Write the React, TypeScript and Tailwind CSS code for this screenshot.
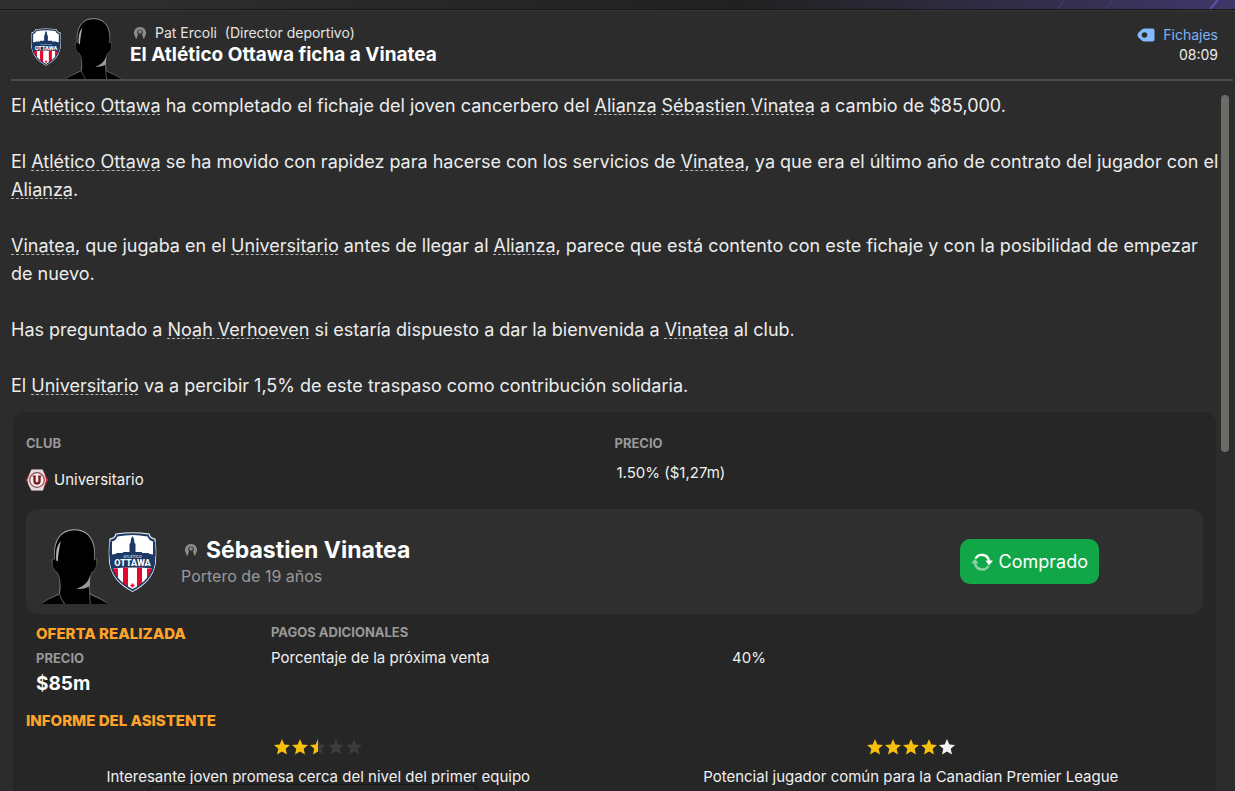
import React from "react";

const sans = "font-['Inter','Liberation_Sans',sans-serif]";

function Crest({ className }: { className?: string }) {
  return (
    <svg viewBox="0 0 48 60" className={className} role="img" aria-label="Atlético Ottawa">
      <defs>
        <clipPath id="crestInner">
          <path d="M9 3.5 Q24 0 39 3.5 Q41 8 45.5 8.5 Q46.5 20 45.5 32 Q43 48 24 57.5 Q5 48 2.5 32 Q1.5 20 2.5 8.5 Q7 8 9 3.5Z" />
        </clipPath>
      </defs>
      <path
        d="M7 1.5 Q24 -1 41 1.5 Q42 6 47 6.5 Q48.5 20 47.2 32 Q44 50 24 60 Q4 50 .8 32 Q-.5 20 1 6.5 Q6 6 7 1.5Z"
        fill="#e9edf2"
      />
      <path
        d="M8 2.5 Q24 0 40 2.5 Q41.5 7 46 7.5 Q47.5 20 46.2 32 Q43 49 24 58.8 Q5 49 1.8 32 Q.5 20 2 7.5 Q6.5 7 8 2.5Z"
        fill="#1d3a66"
      />
      <g clipPath="url(#crestInner)">
        <path d="M9 4.5 Q24 1.5 39 4.5 Q41 9 44.5 9.5 V30 H3.5 V9.5 Q7 9 9 4.5Z" fill="#fff" />
        <path
          d="M0 23 L7 22 8 21 14 21 15 20 H21 V12 L22 11 22.5 7 24 4 25.5 7 26 11 27 12 V20 H33 L34 21 H40 L41 22 48 23 V37 Q24 33.5 0 37Z"
          fill="#1d3a66"
        />
        <path d="M0 37 Q24 34 48 37 V60 H0Z" fill="#fff" />
        <path d="M4 36.500h5.500V60H4zM14.500 35.500h5V60h-5zM28.500 35.500h5V60h-5zM38.500 36.500H44V60h-5.500z" fill="#e4062c" />
        <path d="M24 51.5v4M22 53.5h4" stroke="#e4062c" strokeWidth="1.6" />
      </g>
      <path d="M2 10 Q1 22 2.5 32 Q5 48 24 58 Q43 48 45.5 32 Q47 22 46 10" fill="none" stroke="#1d3a66" strokeWidth="1.6" />
      <g textAnchor="middle" fontFamily="Roboto">
        <text x="24" y="26" fontSize="4" fontWeight="700" fill="#b9c4d3">
          ATLÉTICO
        </text>
        <text x="24" y="34.3" fontSize="9" fontWeight="800" fill="#fff">
          OTTAWA
        </text>
      </g>
    </svg>
  );
}

function Silhouette({ id, viewBox, className }: { id: string; viewBox: string; className?: string }) {
  return (
    <svg viewBox={viewBox} className={className} aria-hidden="true">
      <defs>
        <linearGradient id={id} x1="0" y1="0" x2="0" y2="1">
          <stop offset="0" stopColor="#b8b8b8" />
          <stop offset="0.25" stopColor="#8a8a8a" />
          <stop offset="0.5" stopColor="#3c3c3c" />
          <stop offset="0.8" stopColor="#8a8a8a" />
          <stop offset="1" stopColor="#4a4a4a" />
        </linearGradient>
      </defs>
      <path
        d="M-3 75 C4 69 12 67 17 64 C18 60 18 54 17 48 L15 43 C11.5 42 9.5 36 10 31 C10.5 29 12 29 12.500 30 C10.500 12 18 .8 32 .8 C46 .8 53.500 12 51.500 30 C52.500 29 54 29 54 31 C54.500 36 52.500 42 49 43 L47 49 C46 55 46.500 60 47.500 64 C52 67 60 69 67 75Z"
        fill="#000"
        stroke={`url(#${id})`}
        strokeWidth="1"
      />
      <path d="M14 31 C13.500 22 14.500 16 18.500 12 C17 18 16 24 15.500 32Z" fill="#b4b4b4" />
      <path d="M47.500 46 C45 54 40 57 34 59 C41 59.500 45 58 47 56Z" fill="#9a9a9a" />
      <path d="M17 64 Q19 70 23 75 M47 58 Q46.500 68 48 75" fill="none" stroke="#4d4d4d" strokeWidth="1.200" />
    </svg>
  );
}

function PersonBadge() {
  return (
    <svg viewBox="0 0 12 12" className="size-3 shrink-0" aria-hidden="true">
      <path d="M6 0a6 6 0 0 0-4.800 9.600L1.600 11.500H10.400L10.800 9.600A6 6 0 0 0 6 0Z" fill="#8c8c8c" />
      <path d="M3 12C3 9.300 3.900 8 4.500 7.600L7.500 7.600C8.100 8 9 9.300 9 12Z" fill="#2b2b2b" />
      <circle cx="6" cy="5.200" r="2.800" fill="#2b2b2b" />
      <circle cx="6" cy="4.800" r="1.900" fill="#858585" />
    </svg>
  );
}

function UniversitarioBadge() {
  return (
    <svg viewBox="0 0 22 22" className="size-[22px] shrink-0" aria-hidden="true">
      <path d="M5.500 .5H16.500L22 11 16.500 21.500H5.500L0 11Z" fill="#d22c42" />
      <path d="M5.500 .5H16.500L18.500 5 20 11 17 21.500H5.500L2.500 16 1.500 11 3.500 5Z" fill="#e2dcdc" />
      <circle cx="11" cy="11" r="7.300" fill="#f4eeee" stroke="#8e4a50" strokeWidth="1.200" />
      <path d="M8.500 7V12A2.500 2.500 0 0 0 13.500 12V7" fill="none" stroke="#7f1d25" strokeWidth="2.400" />
      <path d="M6.500 7H10M12 7H15.500" stroke="#7f1d25" strokeWidth="1.200" />
    </svg>
  );
}

function SwapIcon() {
  return (
    <svg viewBox="0 0 22 20" className="h-5 w-[22px] shrink-0" aria-hidden="true">
      <path d="M4.500 6.500A7.300 7.300 0 0 1 18 9" fill="none" stroke="#fff" strokeWidth="2.400" />
      <path d="M14.500 8.500H22L18 13.500Z" fill="#fff" />
      <g opacity="0.5">
        <path d="M4 11A7.300 7.300 0 0 0 17.500 14" fill="none" stroke="#fff" strokeWidth="2.400" />
        <path d="M0 11.500H7.500L4 6.800Z" fill="#fff" />
      </g>
    </svg>
  );
}

const starPath = "M8 0 10.300 5.400 16 5.900 11.700 9.800 13 15.600 8 12.600 3 15.600 4.300 9.800 0 5.900 5.700 5.400Z";

function Stars({ fills, label }: { fills: string[]; label: string }) {
  return (
    <div className="flex h-4 justify-center gap-[2px]" role="img" aria-label={label}>
      {fills.map((fill, i) => (
        <svg key={i} viewBox="0 0 16 16" className="size-4">
          <path d={starPath} fill={fill === "half" ? "#3a3c3c" : fill} />
          {fill === "half" && (
            <path d="M8 0V12.600L3 15.600 4.300 9.800 0 5.900 5.700 5.400Z" fill="#f6c00c" />
          )}
        </svg>
      ))}
    </div>
  );
}

function L({ children }: { children: React.ReactNode }) {
  return (
    <a
      href="#"
      className="underline decoration-[#b5b5b5] decoration-dashed decoration-1 underline-offset-2 [text-decoration-skip-ink:none]"
    >
      {children}
    </a>
  );
}

function Header() {
  return (
    <header className="ml-[11px] mr-[2px] flex h-[70px] shrink-0 border-b-2 border-[#4b4b4b]">
      <Crest className="ml-5 mt-[17px] h-[38px] w-[30px]" />
      <Silhouette id="rimHeader" viewBox="-2 0 68 74" className="ml-1 mt-[7px] h-[61px] w-[57px]" />
      <div className="ml-2 mt-3 flex-1">
        <div className="flex h-5 items-center gap-[9px] pl-1 text-sm text-[#e4e4e4]">
          <PersonBadge />
          <span>Pat Ercoli&nbsp; (Director deportivo)</span>
        </div>
        <h1 className="text-[19px]/6 font-bold text-white">El Atlético Ottawa ficha a Vinatea</h1>
      </div>
      <div className="mr-[15px] mt-[14px] text-right text-sm/5">
        <a href="#" className="flex items-center gap-2 text-[#7fb2f5]">
          <svg viewBox="0 0 18 14" className="h-[14px] w-[18px]" aria-hidden="true">
            <path
              d="M5.500 1Q6.500 .5 8 .5H15.500Q17.500 .5 17.500 2.500V11.500Q17.500 13.500 15.500 13.500H8Q6.500 13.500 5.500 13L1.500 9.500Q-.5 7 1.500 4.500ZM7.500 4.200A2.800 2.800 0 1 0 7.500 9.800 2.800 2.800 0 1 0 7.500 4.200Z"
              fill="#82baff"
              fillRule="evenodd"
            />
          </svg>
          Fichajes
        </a>
        <time className="block text-[#ececec]">08:09</time>
      </div>
    </header>
  );
}

function Message() {
  return (
    <div className="space-y-7 text-lg/7 text-[#ececec]">
      <p>
        El <L>Atlético Ottawa</L> ha completado el fichaje del joven cancerbero del <L>Alianza</L>{" "}
        <L>Sébastien Vinatea</L> a cambio de $85,000.
      </p>
      <p>
        El <L>Atlético Ottawa</L> se ha movido con rapidez para hacerse con los servicios de{" "}
        <L>Vinatea</L>, ya que era el último año de contrato del jugador con el <L>Alianza</L>.
      </p>
      <p>
        <L>Vinatea</L>, que jugaba en el <L>Universitario</L> antes de llegar al <L>Alianza</L>,
        parece que está contento con este fichaje y con la posibilidad de empezar de nuevo.
      </p>
      <p>
        Has preguntado a <L>Noah Verhoeven</L> si estaría dispuesto a dar la bienvenida a{" "}
        <L>Vinatea</L> al club.
      </p>
      <p>
        El <L>Universitario</L> va a percibir 1,5% de este traspaso como contribución solidaria.
      </p>
    </div>
  );
}

const gold = "#f6c00c";
const off = "#3a3c3c";

function TransferPanel() {
  return (
    <section className="ml-[2px] mr-[5px] mt-3 rounded-xl bg-[#262626] px-[13px] pt-[21px] text-[15px]/5 text-[#f0f0f0]">
      <div className="grid grid-cols-2">
        <div>
          <h2 className="text-[13px]/5 font-bold text-[#999]">CLUB</h2>
          <div className="mt-4 flex items-center gap-[6px]">
            <UniversitarioBadge />
            <span>Universitario</span>
          </div>
        </div>
        <div>
          <h2 className="text-[13px]/5 font-bold text-[#999]">PRECIO</h2>
          <p className="mt-[10px] pl-[2px]">1.50% ($1,27m)</p>
        </div>
      </div>

      <div className="mt-[18px] flex h-[105px] items-center rounded-xl bg-[#2f2f2f] pl-4 pr-[104px]">
        <Silhouette id="rimCard" viewBox="0 0 64 74" className="mt-[10px] h-[75px] w-[65px]" />
        <Crest className="h-[60px] w-[51px]" />
        <div className="ml-[23px] flex-1">
          <div className="flex items-center gap-[9px] pl-1">
            <PersonBadge />
            <h2 className="text-[23px]/7 font-bold text-white">Sébastien Vinatea</h2>
          </div>
          <p className="text-base/6 text-[#999]">Portero de 19 años</p>
        </div>
        <button className="flex h-[45px] items-center gap-[6px] rounded-[10px] bg-[#11a648] px-[11px] text-lg/6 text-white">
          <SwapIcon />
          Comprado
        </button>
      </div>

      <div className="flex px-[10px] pt-2">
        <div className="w-[235px]">
          <h2 className="text-[15px]/6 font-extrabold text-[#ffa32b]">OFERTA REALIZADA</h2>
          <h3 className="text-[13px]/6 font-bold text-[#999]">PRECIO</h3>
          <p className="text-[19px]/7 font-bold text-white">$85m</p>
        </div>
        <div className="flex-1">
          <h3 className="text-[13px]/5 font-bold text-[#999]">PAGOS ADICIONALES</h3>
          <div className="mt-[6px] grid grid-cols-2">
            <span>Porcentaje de la próxima venta</span>
            <span>40%</span>
          </div>
        </div>
      </div>

      <h2 className="mt-[11px] text-[15px]/6 font-extrabold text-[#ffa32b]">INFORME DEL ASISTENTE</h2>
      <div className="-mx-1 mt-[6px] grid grid-cols-2 text-center">
        <div>
          <Stars fills={[gold, gold, "half", off, off]} label="2,5 de 5" />
          <p className="mt-3">Interesante joven promesa cerca del nivel del primer equipo</p>
        </div>
        <div>
          <Stars fills={[gold, gold, gold, gold, "#f5f5f5"]} label="4 de 5" />
          <p className="mt-3">Potencial jugador común para la Canadian Premier League</p>
        </div>
      </div>
      <div className="h-10" />
    </section>
  );
}

function App() {
  return (
    <div className={`flex h-screen flex-col overflow-hidden bg-[#2c2c2c] ${sans}`}>
      <div className="h-[9px] shrink-0 bg-linear-to-r from-[#303030] via-[#212121] via-60% to-[#40366a]">
        <svg viewBox="0 0 240 9" className="ml-auto h-[9px] w-60" aria-hidden="true">
          <path d="M62 9 70 0M110 9 118 0M190 9 198 0" stroke="#403766" strokeWidth="2" />
          <path d="M215 9 223 0" stroke="#5f4fa8" strokeWidth="2" />
        </svg>
      </div>
      <div className="h-[2px] shrink-0 border-b border-t border-b-[#363636] border-t-[#171717]" />
      <Header />
      <div className="flex min-h-0 flex-1">
        <main className="min-w-0 flex-1 overflow-hidden pl-[11px] pt-[11px]">
          <Message />
          <TransferPanel />
        </main>
        <div className="mr-[6px] mt-[14px] h-[357px] w-2 rounded bg-[#6b6b67]" />
      </div>
      <div className="absolute left-[148px] top-[784px] h-[7px] w-[330px] rounded-t-lg border border-b-0 border-[#171717]" />
    </div>
  );
}

export default App;
